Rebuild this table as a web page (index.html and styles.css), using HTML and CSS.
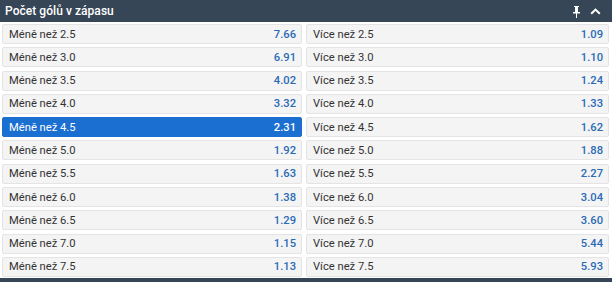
FILE: index.html
```html
<!DOCTYPE html>
<html lang="cs">
<head>
<meta charset="utf-8">
<link rel="stylesheet" href="styles.css">
</head>
<body>
<div class="market">
  <div class="head">
    <span class="title">Počet gólů v zápasu</span>
    <span class="icons">
      <svg class="pin" width="7" height="12" viewBox="0 0 7 12"><path d="M1 0h5v1H5v5h2v1.6H4v4.4H3V7.6H0V6h2V1H1z" fill="#fff"/><rect x="3" y="1" width="1" height="5" fill="#fff" opacity="0.35"/></svg>
      <svg class="chev" width="11" height="7" viewBox="0 0 11 7"><path d="M1.2 5.8L5.5 1.6l4.3 4.2" fill="none" stroke="#fff" stroke-width="2"/></svg>
    </span>
  </div>
  <div class="grid">
    <div class="cell"><span>Méně než 2.5</span><b>7.66</b></div>
    <div class="cell"><span>Více než 2.5</span><b>1.09</b></div>
    <div class="cell"><span>Méně než 3.0</span><b>6.91</b></div>
    <div class="cell"><span>Více než 3.0</span><b>1.10</b></div>
    <div class="cell"><span>Méně než 3.5</span><b>4.02</b></div>
    <div class="cell"><span>Více než 3.5</span><b>1.24</b></div>
    <div class="cell"><span>Méně než 4.0</span><b>3.32</b></div>
    <div class="cell"><span>Více než 4.0</span><b>1.33</b></div>
    <div class="cell sel"><span>Méně než 4.5</span><b>2.31</b></div>
    <div class="cell"><span>Více než 4.5</span><b>1.62</b></div>
    <div class="cell"><span>Méně než 5.0</span><b>1.92</b></div>
    <div class="cell"><span>Více než 5.0</span><b>1.88</b></div>
    <div class="cell"><span>Méně než 5.5</span><b>1.63</b></div>
    <div class="cell"><span>Více než 5.5</span><b>2.27</b></div>
    <div class="cell"><span>Méně než 6.0</span><b>1.38</b></div>
    <div class="cell"><span>Více než 6.0</span><b>3.04</b></div>
    <div class="cell"><span>Méně než 6.5</span><b>1.29</b></div>
    <div class="cell"><span>Více než 6.5</span><b>3.60</b></div>
    <div class="cell"><span>Méně než 7.0</span><b>1.15</b></div>
    <div class="cell"><span>Více než 7.0</span><b>5.44</b></div>
    <div class="cell"><span>Méně než 7.5</span><b>1.13</b></div>
    <div class="cell"><span>Více než 7.5</span><b>5.93</b></div>
  </div>
  <div class="foot"></div>
</div>
</body>
</html>
```
FILE: styles.css
```css
* { box-sizing: border-box; }
html, body { margin: 0; padding: 0; background: #fff; }
body { font-family: Roboto, "Noto Sans", sans-serif; width: 612px; height: 282px; overflow: hidden; }
.market { width: 612px; }
.head {
  height: 22px;
  background: #364656;
  color: #fff;
  display: flex;
  align-items: center;
  justify-content: space-between;
  padding: 0 11px 0 5px;
}
.title { font-size: 12px; font-weight: 500; letter-spacing: 0.05px; }
.icons { display: flex; align-items: center; gap: 10px; }
.pin { display: block; margin-top: 1px; }
.chev { display: block; margin-top: 1px; }
.grid {
  display: grid;
  grid-template-columns: 300px 303px;
  column-gap: 4px;
  row-gap: 3.3px;
  padding: 2px 3px 0 2px;
}
.cell {
  height: 20px;
  background: #f4f4f4;
  border: 1px solid #e4e4e4;
  border-radius: 2px;
  display: flex;
  align-items: center;
  justify-content: space-between;
  padding: 0 5px 0 6px;
  font-size: 11.2px;
  color: #333;
}
.cell b { font-weight: 500; color: #2b6bb5; }
.cell.sel { background: #1b6fd1; border-color: #1b6fd1; color: #fff; }
.cell.sel b { color: #fff; }
.foot { height: 5px; background: #364656; margin-top: 1.5px; }
```
